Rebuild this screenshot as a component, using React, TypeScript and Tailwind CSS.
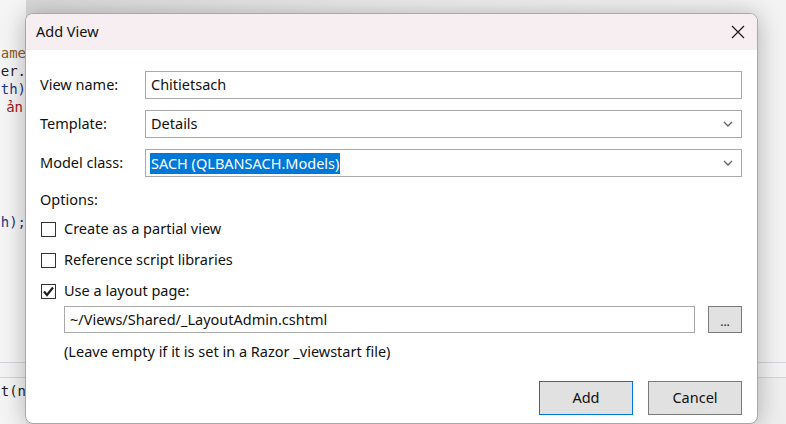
import React from "react";

const Chevron = () => (
  <svg width="10" height="6" viewBox="0 0 10 6" className="text-[#606060]">
    <path d="M1 1 L5 5 L9 1" fill="none" stroke="currentColor" strokeWidth="1.3" />
  </svg>
);

const Checkbox = ({ checked }: { checked?: boolean }) => (
  <div className="w-[15px] h-[15px] border border-[#333333] bg-white flex items-center justify-center shrink-0">
    {checked && (
      <svg width="13" height="13" viewBox="0 0 13 13">
        <path d="M2 6.5 L5 10 L11 2.5" fill="none" stroke="#202020" strokeWidth="2.2" />
      </svg>
    )}
  </div>
);

const CodeLine = ({ children, cls, mt }: { children: React.ReactNode; cls: string; mt: string }) => (
  <div className={`flex justify-end whitespace-nowrap h-[18px] leading-[18px] ${mt} ${cls}`}>{children}</div>
);

export default function App() {
  const font = { fontFamily: '"Noto Sans", "Open Sans", sans-serif' };
  return (
    <div className="relative w-[786px] h-[424px] overflow-hidden bg-[#eeeeee]" style={font}>
      {/* background editor */}
      <div className="absolute inset-0 flex flex-col">
        <div className="flex-1 flex">
          <div
            className="w-[26px] bg-[#f5f5f5] overflow-hidden text-[14px] flex flex-col"
            style={{ fontFamily: '"DejaVu Sans Mono", "Liberation Mono", monospace' }}
          >
            <CodeLine mt="mt-[44px]" cls="text-[#8a5a1a]">ame</CodeLine>
            <CodeLine mt="" cls="text-[#1e1e1e]">er.</CodeLine>
            <CodeLine mt="" cls="text-[#1f377f]">th)</CodeLine>
            <CodeLine mt="" cls="text-[#a31515] pr-[3px]">ản</CodeLine>
            <CodeLine mt="mt-[97px]" cls="text-[#1f377f]">h);</CodeLine>
          </div>
          <div className="flex-1 bg-gradient-to-r from-[#d8d8d8] via-[#ececec] to-[#f3f3f3]" />
        </div>
        <div className="h-[1px] bg-[#d4d4dc]" />
        <div className="h-[14px] bg-[#f3f3f3]" />
        <div className="h-[1px] bg-[#d4d4dc]" />
        <div
          className="h-[46px] bg-[#f5f5f5] text-[14px] text-[#1e1e1e] overflow-hidden w-[26px] flex justify-end whitespace-nowrap pt-[3px]"
          style={{ fontFamily: '"DejaVu Sans Mono", "Liberation Mono", monospace' }}
        >
          t(n
        </div>
      </div>

      {/* dialog */}
      <div className="absolute left-[25px] top-[13px] w-[733px] h-[411px] rounded-[8px] border border-[#a8a8a8] bg-white shadow-[0_2px_24px_rgba(0,0,0,0.28)] overflow-hidden flex flex-col text-[14.5px] text-[#111111]">
        <div className="h-[36px] bg-[#f7eef2] flex items-center justify-between pl-[10px] pr-[12px] shrink-0">
          <span>Add View</span>
          <svg width="14" height="14" viewBox="0 0 14 14">
            <path d="M1 1 L13 13 M13 1 L1 13" stroke="#1a1a1a" strokeWidth="1.2" />
          </svg>
        </div>
        <div className="flex flex-col pl-[14px] pr-[15px] pt-[21px]">
          <div className="flex items-center h-[28px]">
            <span className="w-[105px]">View name:</span>
            <div className="flex-1 h-[28px] border border-[#a9a9a9] flex items-center pl-[5px]">Chitietsach</div>
          </div>
          <div className="flex items-center h-[28px] mt-[11px]">
            <span className="w-[105px]">Template:</span>
            <div className="flex-1 h-[28px] border border-[#a9a9a9] flex items-center justify-between pl-[5px] pr-[8px]">
              <span>Details</span>
              <Chevron />
            </div>
          </div>
          <div className="flex items-center h-[28px] mt-[11px]">
            <span className="w-[105px]">Model class:</span>
            <div className="flex-1 h-[28px] border border-[#a9a9a9] flex items-center justify-between pl-[4px] pr-[8px]">
              <span className="bg-[#0078d7] text-white leading-[21px] px-[1px]">SACH (QLBANSACH.Models)</span>
              <Chevron />
            </div>
          </div>
          <div className="mt-[11px] leading-[22px]">Options:</div>
          <div className="flex items-center gap-[8px] mt-[9px] pl-[1px] h-[20px]">
            <Checkbox />
            <span>Create as a partial view</span>
          </div>
          <div className="flex items-center gap-[8px] mt-[11px] pl-[1px] h-[20px]">
            <Checkbox />
            <span>Reference script libraries</span>
          </div>
          <div className="flex items-center gap-[8px] mt-[11px] pl-[1px] h-[20px]">
            <Checkbox checked />
            <span>Use a layout page:</span>
          </div>
          <div className="flex items-center mt-[5px] pl-[24px]">
            <div className="flex-1 h-[27px] border border-[#a9a9a9] flex items-center pl-[5px]">~/Views/Shared/_LayoutAdmin.cshtml</div>
            <div className="ml-[13px] w-[34px] h-[27px] border border-[#7a7a7a] bg-[#e1e1e1] flex items-center justify-center text-[12px] leading-none pt-[4px]">...</div>
          </div>
          <div className="pl-[24px] mt-[7px] leading-[22px]">(Leave empty if it is set in a Razor _viewstart file)</div>
          <div className="flex justify-end gap-[15px] mt-[19px]">
            <div className="w-[94px] h-[34px] border border-[#0078d7] bg-[#e1e1e1] flex items-center justify-center">Add</div>
            <div className="w-[94px] h-[34px] border border-[#7a7a7a] bg-[#e1e1e1] flex items-center justify-center">Cancel</div>
          </div>
        </div>
      </div>
    </div>
  );
}
